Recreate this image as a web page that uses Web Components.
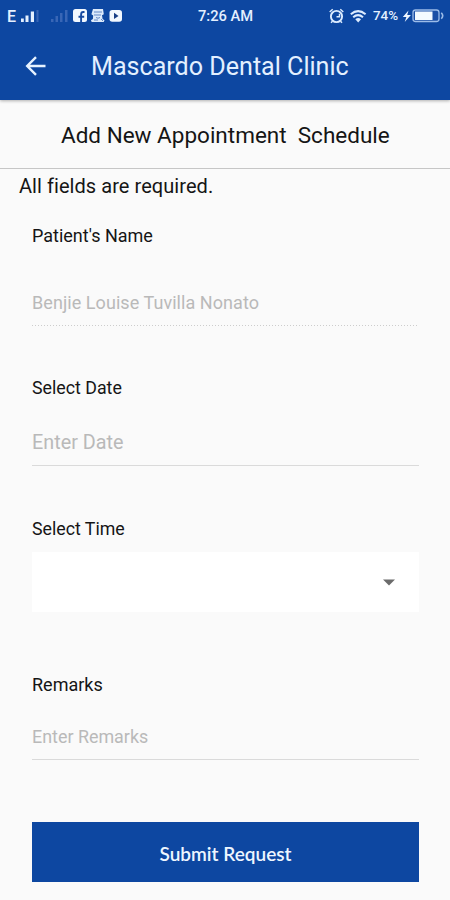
<!DOCTYPE html>
<html lang="en">
<head>
<meta charset="utf-8">
<title>Mascardo Dental Clinic</title>
<style>
html,body{margin:0;height:900px;overflow:hidden;background:#fafafa}
body{font-family:Roboto,"Liberation Sans",sans-serif;color:#151515}
</style>
</head>
<body>
<clinic-app></clinic-app>

<template id="status-tpl">
<style>
:host{display:flex;height:32px;align-items:center;box-sizing:border-box;padding-left:7px;color:#e4f0ff;font-weight:500}
svg{display:block;flex:none}
.e{width:14px;font-size:16px;line-height:32px;padding-top:1px}
.time{width:130px;font-size:14.7px;line-height:32px;white-space:nowrap}
.pct{width:29px;font-size:13.4px;line-height:32px}
</style>
<span class="e">E</span>
<svg width="177" height="32" viewBox="21 0 177 32">
  <g fill="#e4f0ff"><rect x="21" y="18.500" width="2.8" height="3.500"/><rect x="25.5" y="15.500" width="3" height="6.500"/><rect x="30.8" y="11.500" width="3.200" height="10.500"/></g>
  <g fill="#3866b6"><rect x="36.5" y="10" width="2" height="12"/><rect x="51" y="19" width="2.5" height="3"/><rect x="55.5" y="16" width="2.5" height="6"/><rect x="60" y="13" width="2.5" height="9"/><rect x="65" y="10" width="2.5" height="12"/></g>
  <rect x="73" y="9" width="14" height="13" rx="2.5" fill="#f2f8ff"/>
  <path d="M84.5 12h-1.2c-1.7 0-2.2 1-2.2 2.4V22M78.5 16.7h5.7" fill="none" stroke="#1649a0" stroke-width="1.9"/>
  <path d="M93 9h10l.8 5.2-1.8 1 .6 3.8 1.9 1.2-.8 1.8h-12l-.8-1.8 2-1.2.3-3.4-1.8-1.4z" fill="#dceafb"/>
  <path d="M94 12h8M94 15h7M96 17.5q2 1.5 4 0M94 20h4M101 19l2 2" fill="none" stroke="#6288c6" stroke-width="1"/>
  <rect x="109.500" y="10" width="12.500" height="11.800" rx="2.8" fill="#f2f8ff"/>
  <path d="M114 12.800l4.500 3.100-4.500 3.100z" fill="#183f87"/>
</svg>
<span class="time">7:26 AM</span>
<svg width="45" height="32" viewBox="328 0 45 32">
  <g fill="none" stroke="#dcecff" stroke-width="1.900">
    <circle cx="336.500" cy="16.500" r="5.6"/>
    <path d="M329.700 12l3-2.700M343.300 12l-3-2.700M332.500 21.200l-1.500 1.500M340.500 21.200l1.500 1.500M336.500 16.700h3v-2.900" stroke-width="1.500"/>
    <path d="M350.800 14.300Q358 8 365.600 14.300M353.200 17.200Q358 13 363 17.200" stroke-width="2"/>
  </g>
  <path d="M355.300 19.200Q358.200 16.900 361 19.200L358.200 22.500z" fill="#dcecff"/>
</svg>
<span class="pct">74%</span>
<svg width="42" height="32" viewBox="402 0 42 32">
  <path d="M408.500 10.500l-5.700 6.500h3.600l-1.700 5 6.200-6.900h-3.700z" fill="#eef6ff"/>
  <rect x="413" y="10" width="26" height="11.500" rx="2.500" fill="#1b4fa6" stroke="#9cbce8" stroke-width="1.300"/>
  <rect x="415" y="11.500" width="17.500" height="8.500" fill="#f4faff"/>
  <path d="M441.300 12.800q2.800 3 0 6" fill="none" stroke="#9cbce8" stroke-width="1.600"/>
</svg>
</template>

<template id="bar-tpl">
<style>
:host{display:block;height:100px;background:#0d47a1;box-shadow:0 1px 3px rgba(0,0,0,.3)}
.row{display:flex;height:68px;align-items:center;padding-left:25px}
svg{display:block;width:66px;height:24px;flex:none;margin-top:-1px}
h1{margin:0;padding-top:2px;font-size:25.1px;font-weight:400;line-height:68px;color:#e3f0ff;white-space:nowrap}
</style>
<status-bar></status-bar>
<div class="row">
<svg viewBox="0 0 66 24"><path d="M20.500 12H2.500M11 3.200L2.200 12l8.800 8.800" fill="none" stroke="#e6f2ff" stroke-width="2.400"/></svg>
<h1><slot></slot></h1>
</div>
</template>

<template id="field-tpl">
<style>
:host{display:block}
label{display:block;font-size:var(--ls,18px);line-height:24px;white-space:nowrap}
.line{box-sizing:border-box;display:flex;align-items:flex-start;color:#b9b9b9;line-height:24px;border-bottom:1.500px solid #dadada;height:var(--h);margin-top:var(--gap);font-size:var(--fs,18px);white-space:nowrap}
:host([disabled]) .line{letter-spacing:.06px;border-bottom:0;background:repeating-linear-gradient(90deg,#cdcdcd 0 1.500px,transparent 1.500px 3px) left bottom/100% 1px no-repeat}
</style>
<label></label><div class="line"><slot></slot></div>
</template>

<template id="select-tpl">
<style>
:host{display:block}
label{display:block;font-size:17.750px;line-height:24px}
.box{margin-top:11px;height:60px;background:#fff;display:flex;align-items:center;justify-content:flex-end;padding-right:24px}
</style>
<label></label><div class="box"><svg width="12" height="7" viewBox="0 0 12 7"><path d="M0 .5h12L6 6.500z" fill="#6b6b6b"/></svg></div>
</template>

<template id="button-tpl">
<style>
:host{display:block}
button{display:block;width:100%;height:59.500px;border:0;padding:0;background:#0d47a1;color:#edf6ff;font:600 19px Lato,"Open Sans",sans-serif}
span{display:block;padding-top:4px;line-height:55px}
</style>
<button><span><slot></slot></span></button>
</template>

<template id="app-tpl">
<style>
:host{display:block;width:450px;height:900px;background:#fafafa}
h2{margin:0;height:69px;box-sizing:border-box;border-bottom:1.500px solid #c6c6c6;padding-left:61px;font-size:22.500px;font-weight:400;line-height:71px;white-space:pre}
.note{margin:0;padding-left:19px;font-size:20px;letter-spacing:.06px;line-height:34px;height:35px;white-space:nowrap}
form{display:flex;flex-direction:column;padding:20px 31px 0 32px}
</style>
<app-bar>Mascardo Dental Clinic</app-bar>
<h2>Add New Appointment  Schedule</h2>
<p class="note">All fields are required.</p>
<form>
<text-field label="Patient's Name" disabled style="--gap:43px;--h:35px">Benjie Louise Tuvilla Nonato</text-field>
<text-field label="Select Date" style="margin-top:50px;--gap:31px;--h:35px;--fs:19.800px;--ls:17.800px">Enter Date</text-field>
<select-field label="Select Time" style="margin-top:51px"></select-field>
<text-field label="Remarks" style="margin-top:61px;--gap:28px;--h:35px;--fs:17.900px">Enter Remarks</text-field>
<submit-button style="margin-top:62px">Submit Request</submit-button>
</form>
</template>

<script>
const define=(name,tpl)=>customElements.define(name,class extends HTMLElement{
  constructor(){
    super();
    this.attachShadow({mode:'open'}).append(document.getElementById(tpl).content.cloneNode(true));
  }
  connectedCallback(){
    const label=this.shadowRoot.querySelector('label');
    if(label)label.textContent=this.getAttribute('label');
  }
});
define('status-bar','status-tpl');
define('app-bar','bar-tpl');
define('text-field','field-tpl');
define('select-field','select-tpl');
define('submit-button','button-tpl');
define('clinic-app','app-tpl');
</script>
</body>
</html>
